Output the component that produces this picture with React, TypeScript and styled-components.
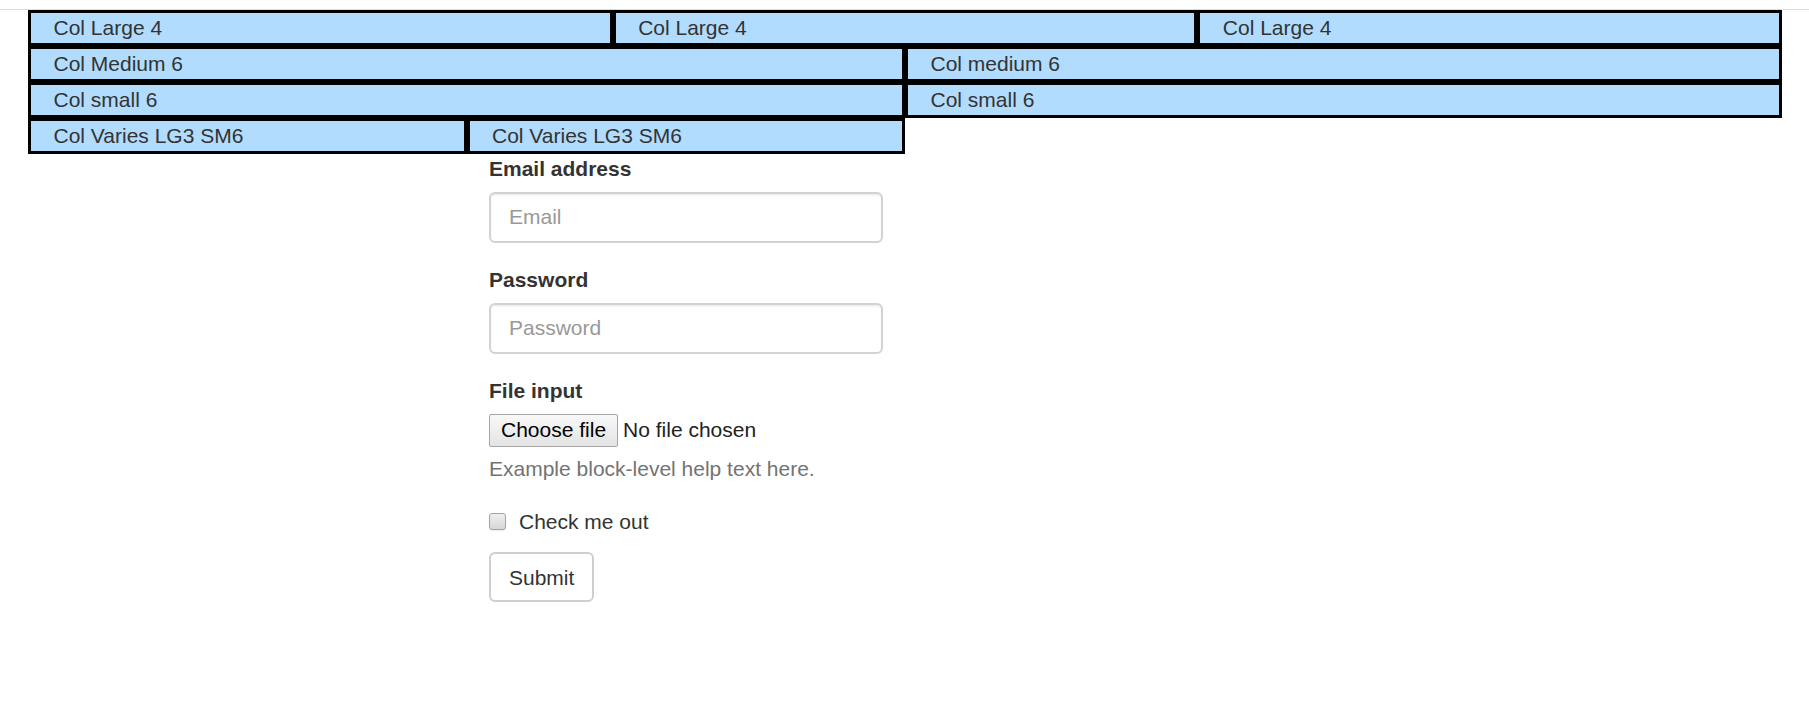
import styled, { createGlobalStyle } from "styled-components";

// the reference is Bootstrap 3 shown at 150%, so every value below is 1.5x
const GlobalStyle = createGlobalStyle`
  html, body {
    margin: 0;
    padding: 0;
    background: #ffffff;
  }
  body {
    font-family: "Liberation Sans", Arial, Helvetica, sans-serif;
    font-size: 21px;
    line-height: 30px;
    color: #333333;
  }
  * {
    box-sizing: border-box;
  }
`;

interface ColProps {
  $span: number;
}

const GRID = [
  [
    { span: 4, text: "Col Large 4" },
    { span: 4, text: "Col Large 4" },
    { span: 4, text: "Col Large 4" },
  ],
  [
    { span: 6, text: "Col Medium 6" },
    { span: 6, text: "Col medium 6" },
  ],
  [
    { span: 6, text: "Col small 6" },
    { span: 6, text: "Col small 6" },
  ],
  [
    { span: 3, text: "Col Varies LG3 SM6" },
    { span: 3, text: "Col Varies LG3 SM6" },
  ],
];

const App = () => {
  return (
    <>
      <GlobalStyle />
      <Page>
        <TopRule />
        <Container>
          {GRID.map((row, rowIndex) => (
            <Row key={rowIndex}>
              {row.map((col, index) => (
                <GridCol key={index} $span={col.span}>
                  {col.text}
                </GridCol>
              ))}
            </Row>
          ))}

          <Row>
            <FormCol>
              <form onSubmit={(e) => e.preventDefault()}>
                <FormGroup>
                  <Label htmlFor="email">Email address</Label>
                  <TextInput id="email" type="email" placeholder="Email" />
                </FormGroup>
                <FormGroup>
                  <Label htmlFor="password">Password</Label>
                  <TextInput
                    id="password"
                    type="password"
                    placeholder="Password"
                  />
                </FormGroup>
                <FormGroup>
                  <Label htmlFor="file">File input</Label>
                  <FilePicker>
                    <HiddenFile id="file" type="file" />
                    <FileButton>Choose file</FileButton>
                    <FileStatus>No file chosen</FileStatus>
                  </FilePicker>
                  <HelpText>Example block-level help text here.</HelpText>
                </FormGroup>
                <CheckRow>
                  <CheckLabel>
                    <CheckBox type="checkbox" />
                    Check me out
                  </CheckLabel>
                </CheckRow>
                <SubmitButton type="submit">Submit</SubmitButton>
              </form>
            </FormCol>
          </Row>
        </Container>
      </Page>
    </>
  );
};

const Page = styled.div`
  padding-top: 9px;
  min-height: 703px;
`;

const TopRule = styled.div`
  height: 1px;
  background: #dedede;
`;

const Container = styled.div`
  width: 1754px;
  margin: 0 0 0 28px;
`;

const Row = styled.div`
  display: flex;
  flex-wrap: wrap;
`;

const GridCol = styled.div<ColProps>`
  flex: 0 0 ${(p) => (p.$span / 12) * 100}%;
  max-width: ${(p) => (p.$span / 12) * 100}%;
  padding: 0 22.5px;
  border: 3px solid #000000;
  background: #b1dcfe;
  line-height: 30px;
  white-space: nowrap;
`;

const FormCol = styled.div`
  flex: 0 0 25%;
  max-width: 25%;
  margin-left: 25%;
  padding: 0 22.5px;
`;

const FormGroup = styled.div`
  margin-bottom: 22.5px;
`;

const Label = styled.label`
  display: inline-block;
  margin-bottom: 7.5px;
  font-weight: 700;
  color: #333333;
`;

const TextInput = styled.input`
  display: block;
  width: 100%;
  height: 51px;
  padding: 9px 18px;
  font-family: inherit;
  font-size: 21px;
  line-height: 30px;
  color: #555555;
  background: #ffffff;
  border: 2px solid #d2d2d2;
  border-radius: 6px;
  box-shadow: inset 0 1.5px 1.5px rgba(0, 0, 0, 0.075);
  outline: none;

  &::placeholder {
    color: #999999;
  }
`;

const FilePicker = styled.label`
  display: flex;
  align-items: center;
  gap: 5px;
  height: 33px;
  cursor: pointer;
`;

const HiddenFile = styled.input`
  display: none;
`;

const FileButton = styled.span`
  display: inline-flex;
  align-items: center;
  height: 33px;
  padding: 0 11px;
  font-size: 21px;
  color: #000000;
  background: linear-gradient(#f8f8f8, #e4e4e4);
  border: 1px solid #a6a6a6;
  border-radius: 2px;
`;

const FileStatus = styled.span`
  color: #222222;
  white-space: nowrap;
`;

const HelpText = styled.span`
  display: block;
  margin-top: 7.5px;
  margin-bottom: 15px;
  color: #737373;
`;

const CheckRow = styled.div`
  position: relative;
  display: block;
  margin: 15px 0;
`;

const CheckLabel = styled.label`
  display: block;
  min-height: 30px;
  padding-left: 30px;
  font-weight: 400;
  cursor: pointer;
`;

const CheckBox = styled.input`
  appearance: none;
  position: absolute;
  left: 0;
  top: 6px;
  width: 17px;
  height: 17px;
  margin: 0;
  background: linear-gradient(#f0f0f0, #d6d6d6);
  border: 1px solid #a3a3a3;
  border-radius: 3px;
  box-shadow: 0 1px 1px rgba(0, 0, 0, 0.08);
`;

const SubmitButton = styled.button`
  display: inline-block;
  height: 50px;
  padding: 9px 18px;
  font-family: inherit;
  font-size: 21px;
  line-height: 30px;
  color: #333333;
  background: #ffffff;
  border: 2px solid #cfcfcf;
  border-radius: 6px;
  cursor: pointer;
`;

export default App;
